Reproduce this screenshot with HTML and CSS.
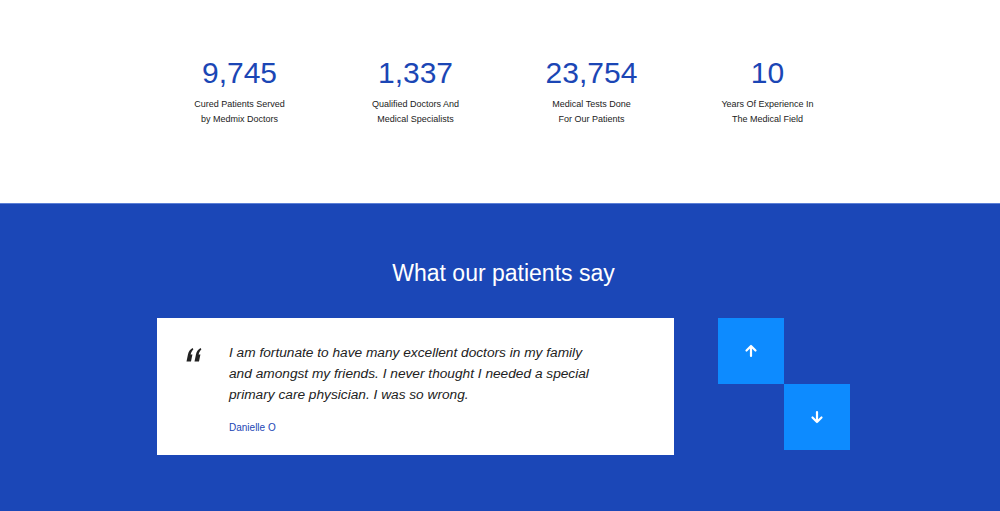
FILE: index.html
```html
<!DOCTYPE html>
<html lang="en">

<head>
    <meta charset="UTF-8">
    <meta name="viewport" content="width=device-width, initial-scale=1.0">
    <title>Medmix</title>
    <link rel="stylesheet" href="styles.css">
</head>

<body>
    <!-- Stats -->
    <section class="stats">
        <div class="stats-row">
            <div class="stat">
                <div class="stat-number">9,745</div>
                <p class="stat-label">Cured Patients Served<br>by Medmix Doctors</p>
            </div>
            <div class="stat">
                <div class="stat-number">1,337</div>
                <p class="stat-label">Qualified Doctors And<br>Medical Specialists</p>
            </div>
            <div class="stat">
                <div class="stat-number">23,754</div>
                <p class="stat-label">Medical Tests Done<br>For Our Patients</p>
            </div>
            <div class="stat">
                <div class="stat-number">10</div>
                <p class="stat-label">Years Of Experience In<br>The Medical Field</p>
            </div>
        </div>
    </section>

    <!-- Testimonials -->
    <section class="testimonials">
        <h2>What our patients say</h2>
        <div class="testimonial-row">
            <div class="testimonial-card">
                <span class="quote-mark">
                    <svg width="16" height="14" viewBox="0 0 16 14"><path d="M6.5 0C4.2 1.4 2.6 3.5 2 6.2L0.5 13.5H5L6.4 6.6H4.6C5.1 4.6 6 2.8 7.4 1.3Z M14.5 0C12.2 1.4 10.6 3.5 10 6.2L8.5 13.5H13L14.4 6.6H12.6C13.1 4.6 14 2.8 15.4 1.3Z" fill="#222"/></svg>
                </span>
                <div class="testimonial-body">
                    <p class="testimonial-text">I am fortunate to have many excellent doctors in my family and amongst my friends. I never thought I needed a special primary care physician. I was so wrong.</p>
                    <span class="testimonial-author">Danielle O</span>
                </div>
            </div>
            <div class="slider-controls">
                <button class="slider-btn" aria-label="Previous">
                    <svg width="14" height="14" viewBox="0 0 14 14"><path d="M7 12V2M2.5 6.5L7 2l4.5 4.5" fill="none" stroke="#fff" stroke-width="2.2" stroke-linecap="round" stroke-linejoin="round"/></svg>
                </button>
                <button class="slider-btn slider-btn-down" aria-label="Next">
                    <svg width="14" height="14" viewBox="0 0 14 14"><path d="M7 2v10M2.5 7.5L7 12l4.5-4.5" fill="none" stroke="#fff" stroke-width="2.2" stroke-linecap="round" stroke-linejoin="round"/></svg>
                </button>
            </div>
        </div>
    </section>
</body>

</html>
```

FILE: styles.css
```css
* {
    margin: 0;
    padding: 0;
    box-sizing: border-box;
}

body {
    font-family: "Liberation Sans", Arial, sans-serif;
    background-color: #fff;
    color: #222;
}

.stats {
    padding: 55px 0 0 7px;
    height: 203px;
}

.stats-row {
    display: flex;
    width: 704px;
    margin: 0 auto;
}

.stat {
    flex: 1;
    text-align: center;
}

.stat-number {
    font-size: 30px;
    line-height: 36px;
    color: #1b46b5;
}

.stat-label {
    margin-top: 6px;
    font-size: 9px;
    line-height: 15px;
    color: #222;
}

.testimonials {
    background-color: #1b47b7;
    padding: 56px 0 60px 7px;
    border-top: 1px solid #5b7fd6;
}

.testimonials h2 {
    text-align: center;
    color: #fff;
    font-weight: normal;
    font-size: 23px;
    line-height: 26px;
    margin-bottom: 32px;
}

.testimonial-row {
    display: flex;
    align-items: flex-start;
    width: 693px;
    margin: 0 auto;
}

.testimonial-card {
    display: flex;
    width: 517px;
    height: 137px;
    background-color: #fff;
    padding: 24px 20px 20px 29px;
}

.quote-mark {
    width: 43px;
    padding-top: 6px;
}

.testimonial-text {
    font-style: italic;
    font-size: 13.7px;
    line-height: 21px;
    color: #222;
    width: 370px;
}

.testimonial-author {
    display: block;
    margin-top: 15px;
    font-size: 10px;
    line-height: 15px;
    color: #1b46b5;
}

.slider-controls {
    display: flex;
    flex-direction: column;
    margin-left: 44px;
}

.slider-btn {
    display: flex;
    align-items: center;
    justify-content: center;
    width: 66px;
    height: 66px;
    border: none;
    background-color: #0d8bff;
    cursor: pointer;
}

.slider-btn-down {
    margin-left: 66px;
}
```
